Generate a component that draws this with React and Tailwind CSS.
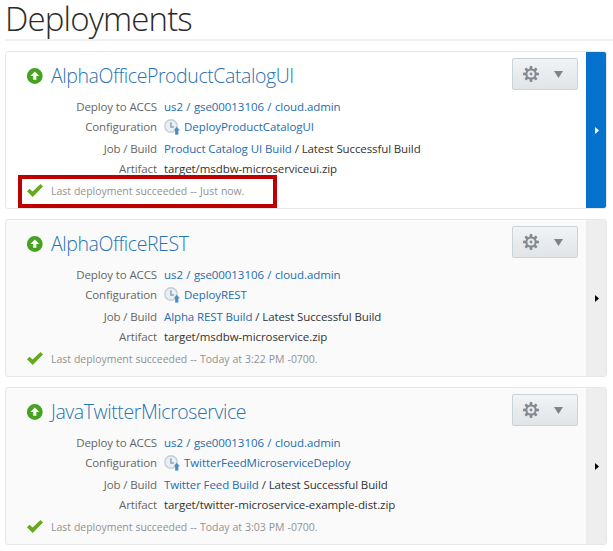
import React from "react";

const deployments = [
  {
    name: "AlphaOfficeProductCatalogUI",
    config: "DeployProductCatalogUI",
    job: "Product Catalog UI Build",
    artifact: "target/msdbw-microserviceui.zip",
    when: "Just now.",
    selected: true,
  },
  {
    name: "AlphaOfficeREST",
    config: "DeployREST",
    job: "Alpha REST Build",
    artifact: "target/msdbw-microservice.zip",
    when: "Today at 3:22 PM -0700.",
  },
  {
    name: "JavaTwitterMicroservice",
    config: "TwitterFeedMicroserviceDeploy",
    job: "Twitter Feed Build",
    artifact: "target/twitter-microservice-example-dist.zip",
    when: "Today at 3:03 PM -0700.",
  },
];

function UpIcon() {
  return (
    <svg width="16" height="16" viewBox="0 0 16 16" className="shrink-0">
      <circle cx="7.8" cy="8" r="7.9" fill="#45a321" />
      <path d="M7.8 3.4 L12.2 8 H9.4 V11.8 H6.2 V8 H3.4 Z" fill="#fff" />
    </svg>
  );
}

function CheckIcon() {
  return (
    <svg width="16" height="13" viewBox="0 0 16 13" className="mb-[2px] shrink-0">
      <path d="M0 7.2 L2.5 4.7 L5.6 7.6 L13.5 0 L16 2.6 L5.7 12.9 Z" fill="#66a81f" />
    </svg>
  );
}

function ConfigIcon() {
  return (
    <svg width="16" height="16" viewBox="0 0 16 16" className="shrink-0">
      <circle cx="7" cy="7" r="6.2" fill="#e9eff4" stroke="#c5ced6" strokeWidth="1.4" />
      <path d="M6.9 3.2 V8 H10" fill="none" stroke="#98a5b2" strokeWidth="1.5" />
      <path d="M12.7 7.6 L16 11.6 H14.5 V15.8 H11 V11.6 H9.4 Z" fill="#4a8cc4" stroke="#fff" strokeWidth="0.3" />
    </svg>
  );
}

function GearIcon() {
  const teeth = [0, 45, 90, 135, 180, 225, 270, 315];
  return (
    <svg width="16" height="16" viewBox="0 0 16 16">
      <g fill="#858b90">
        {teeth.map((a) => (
          <path key={a} d="M6.8 0 H9.2 L9.6 3.5 H6.4 Z" transform={`rotate(${a} 8 8)`} />
        ))}
      </g>
      <circle cx="8" cy="8" r="4.6" fill="none" stroke="#858b90" strokeWidth="2" />
      <circle cx="8" cy="8" r="1.4" fill="#858b90" />
    </svg>
  );
}

function Row({ label, height, children }) {
  return (
    <div className={`flex items-center ${height}`}>
      <div className="w-[151px] shrink-0 text-right tracking-[-0.12px] text-[#666] [word-spacing:0px]">{label}</div>
      <div className="ml-[7px] flex items-center text-[#333]">{children}</div>
    </div>
  );
}

function Card({ d }) {
  return (
    <section
      className={`flex h-[158px] w-[602px] overflow-hidden rounded-[3px] border border-[#e6e6e6] ${
        d.selected ? "bg-white" : "bg-[#fafafa]"
      }`}
    >
      <div className="relative min-w-0 flex-1 whitespace-nowrap">
        <div className="flex h-[44px] items-center justify-between">
          <div className="flex items-center pt-[3px] pl-[21px]">
            <UpIcon />
            <h2 className="ml-2 text-[19.5px] leading-[28px] font-light tracking-[-0.42px] text-[#2a72b0]">{d.name}</h2>
          </div>
          <button className="mr-[8px] flex h-8 w-[66px] items-center justify-between rounded-[2px] border border-[#c8d3dc] bg-linear-to-b from-[#f1f3f5] to-[#e1e5e8] pr-[14px] pl-[10px]">
            <GearIcon />
            <svg width="9" height="7" viewBox="0 0 9 7" className="mt-px">
              <path d="M0 0 H9 L4.5 7 Z" fill="#7d838a" />
            </svg>
          </button>
        </div>
        <div className="text-[11.5px] leading-[16px] tracking-[-0.07px] [word-spacing:0.5px]">
          <Row label="Deploy to ACCS" height="h-[21px]">
            <a className="text-[#1f6cb0]">us2 / gse00013106 / cloud.admin</a>
          </Row>
          <Row label="Configuration" height="h-[20px]">
            <ConfigIcon />
            <a className="ml-1 text-[#1f6cb0]">{d.config}</a>
          </Row>
          <Row label="Job / Build" height="h-[23px]">
            <a className="tracking-[-0.11px] text-[#1f6cb0] [word-spacing:0px]">{d.job}</a>
            <span className="ml-[3px] tracking-[-0.11px] [word-spacing:0px]">/ Latest Successful Build</span>
          </Row>
          <Row label="Artifact" height="h-[18px]">
            {d.artifact}
          </Row>
        </div>
        <div className="flex h-[26px] items-center pl-[21px] text-[10.5px] tracking-[-0.04px] text-[#929292] [word-spacing:0.4px]">
          <CheckIcon />
          <span className="mt-[2px] ml-2">Last deployment succeeded -- {d.when}</span>
        </div>
        {d.selected && (
          <div className="absolute top-[123px] left-[12px] h-[33px] w-[259px] border-[4px] border-[#bf0000]" />
        )}
      </div>
      <div
        className={`-my-px -mr-px flex w-[21px] shrink-0 items-center justify-center ${
          d.selected ? "bg-[#0572ce] text-white" : "bg-[#eeeeee] text-black"
        }`}
      >
        <svg width="4" height="7" viewBox="0 0 4 7">
          <path d="M0 0 L4 3.5 L0 7 Z" fill="currentColor" />
        </svg>
      </div>
    </section>
  );
}

export default function App() {
  return (
    <main className="h-[551px] w-[613px] bg-white font-['Open_Sans','Noto_Sans',sans-serif]">
      <div className="ml-[5px] h-[41px] border-b-2 border-[#ecf0f4]">
        <h1 className="text-[33px] leading-[38px] font-light tracking-[-0.85px] text-[#2b2b2b]">Deployments</h1>
      </div>
      <div className="mt-[10px] ml-[5px] flex flex-col gap-[10px]">
        {deployments.map((d) => (
          <Card key={d.name} d={d} />
        ))}
      </div>
    </main>
  );
}
